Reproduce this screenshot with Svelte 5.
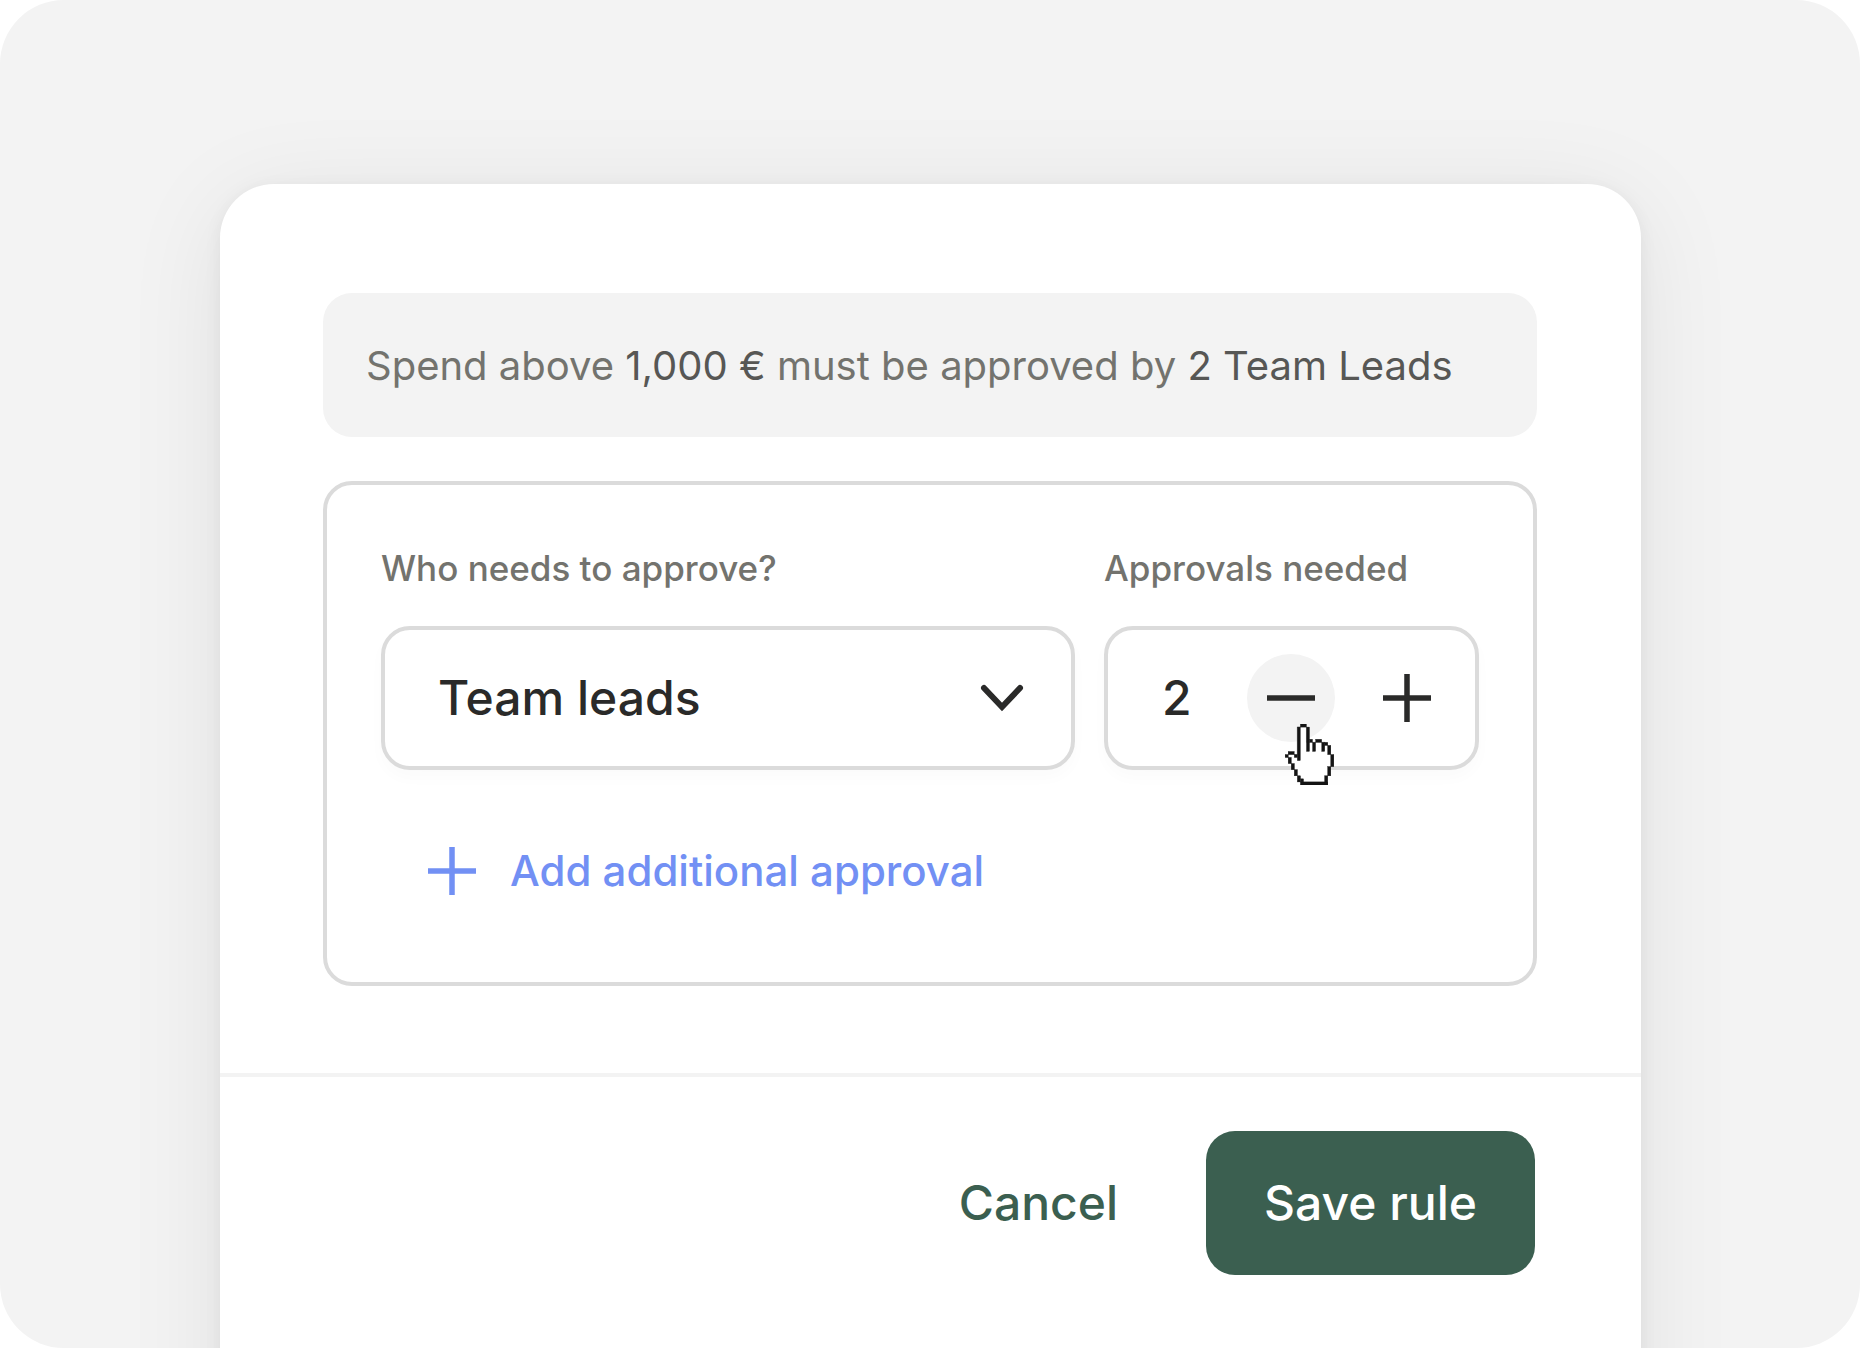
<script>
	let role = $state('Team leads');
	let approvals = $state(2);

	const roles = ['Team leads', 'Admins', 'Finance'];

	// Outline of the pointing hand on a 16x20 grid, as [x, y, width, height].
	const hand = [
		[5, 0, 2, 1],
		[4, 1, 1, 11],
		[7, 1, 1, 8],
		[8, 5, 1, 1],
		[9, 6, 1, 3],
		[10, 5, 2, 1],
		[12, 6, 1, 3],
		[13, 6, 1, 1],
		[14, 7, 1, 3],
		[15, 10, 1, 4],
		[14, 14, 1, 3],
		[13, 17, 1, 3],
		[5, 19, 9, 1],
		[5, 18, 1, 1],
		[4, 17, 1, 2],
		[3, 15, 1, 2],
		[2, 13, 1, 2],
		[1, 11, 1, 2],
		[0, 10, 1, 1],
		[1, 9, 2, 1],
		[3, 10, 1, 1]
	];
</script>

<main class="stage">
	<form class="card" onsubmit={(e) => e.preventDefault()}>
		<div class="body">
			<p class="summary">
				Spend above <strong>1,000 €</strong> must be approved by <strong>{approvals} Team Leads</strong>
			</p>

			<section class="rule">
				<div class="fields">
					<div class="field">
						<label for="role">Who needs to approve?</label>
						<div class="control">
							<select id="role" bind:value={role}>
								{#each roles as r (r)}
									<option>{r}</option>
								{/each}
							</select>
							<svg class="chevron" viewBox="0 0 44 28" aria-hidden="true">
								<path d="M4 4 22 23 40 4" />
							</svg>
						</div>
					</div>

					<div class="field">
						<label for="approvals">Approvals needed</label>
						<div class="control stepper">
							<input id="approvals" type="text" inputmode="numeric" bind:value={approvals} />
							<button
								type="button"
								class="step active"
								aria-label="Fewer approvals"
								onclick={() => (approvals = Math.max(1, +approvals - 1))}
							>
								<svg class="icon" viewBox="0 0 48 48" aria-hidden="true"><path d="M0 24h48" /></svg>
								<svg class="hand" viewBox="0 0 16 20" aria-hidden="true">
									<path class="fill" d="M5 1h2v5h6v1h1v3h1v4h-1v3h-1v2H6v-1H5v-1H4v-2H3v-2H2v-2H1v-1h3V1z" />
									{#each hand as [x, y, width, height]}
										<rect {x} {y} {width} {height} />
									{/each}
								</svg>
							</button>
							<button
								type="button"
								class="step"
								aria-label="More approvals"
								onclick={() => (approvals = +approvals + 1)}
							>
								<svg class="icon" viewBox="0 0 48 48" aria-hidden="true"><path d="M0 24h48M24 0v48" /></svg>
							</button>
						</div>
					</div>
				</div>

				<button type="button" class="add">
					<svg class="icon" viewBox="0 0 48 48" aria-hidden="true"><path d="M0 24h48M24 0v48" /></svg>
					Add additional approval
				</button>
			</section>
		</div>

		<footer class="actions">
			<button type="button" class="cancel">Cancel</button>
			<button type="submit" class="save">Save rule</button>
		</footer>
	</form>
</main>

<style>
	:global(body) {
		background: #fff;
	}
	.stage {
		box-sizing: border-box;
		display: flex;
		min-height: 100vh;
		padding: 184px 219px 0 220px;
		border-radius: 64px;
		overflow: hidden;
		background: #f3f3f3;
		font-family: Inter, 'Liberation Sans', sans-serif;
		font-weight: 500;
	}
	/* The card runs on past the bottom edge, so its shadow doesn't fade there. */
	.card {
		flex: 1;
		min-width: 0;
		margin-bottom: -120px;
		border-radius: 54px 54px 0 0;
		background: #fff;
		box-shadow:
			0 16px 100px rgba(0, 0, 0, 0.08),
			0 4px 18px rgba(0, 0, 0, 0.06);
	}
	.body {
		padding: 109px 104px 87px 103px;
	}
	.summary {
		margin: 0 0 44px;
		padding: 49px 43px 47px;
		border-radius: 29px;
		background: #f3f3f3;
		color: #73736e;
		font-size: 40px;
		font-weight: 400;
		line-height: 48px;
	}
	.summary strong {
		color: #575755;
		font-weight: 400;
	}
	.rule {
		padding: 59px 54px 75px;
		border: 4px solid #dbdbdb;
		border-radius: 29px;
	}
	.fields {
		display: grid;
		grid-template-columns: 694fr 375fr;
		gap: 29px;
	}
	.field {
		display: flex;
		flex-direction: column;
		gap: 34px;
		min-width: 0;
	}
	label {
		color: #73736e;
		font-size: 35px;
		line-height: 48px;
		white-space: nowrap;
	}
	.control {
		position: relative;
		box-sizing: border-box;
		display: flex;
		align-items: center;
		height: 144px;
		border: 4px solid #dbdbdb;
		border-radius: 29px;
		box-shadow: 0 8px 16px rgba(0, 0, 0, 0.02);
	}
	select,
	input,
	button {
		margin: 0;
		padding: 0;
		border: 0;
		background: none;
		color: #2a2a29;
		font: inherit;
	}
	select,
	input {
		font-size: 48px;
		line-height: 60px;
	}
	button {
		cursor: pointer;
	}
	select {
		flex: 1;
		align-self: stretch;
		padding: 0 100px 0 53px;
		border-radius: 25px;
		appearance: none;
	}
	.chevron {
		position: absolute;
		right: 47px;
		width: 44px;
		height: 28px;
		fill: none;
		stroke: #2a2a29;
		stroke-width: 6;
		stroke-linecap: round;
		stroke-linejoin: miter;
		pointer-events: none;
	}
	.stepper {
		padding: 0 24px 0 54px;
	}
	input {
		flex: 1;
		width: 0;
		min-width: 0;
	}
	.step {
		position: relative;
		display: grid;
		place-items: center;
		width: 88px;
		height: 88px;
		border-radius: 50%;
	}
	.step + .step {
		margin-left: 28px;
	}
	.step.active {
		background: #f3f3f3;
	}
	.icon {
		display: block;
		width: 48px;
		height: 48px;
		fill: none;
		stroke: currentColor;
		stroke-width: 5.5;
	}
	.hand {
		position: absolute;
		top: 70px;
		left: 38px;
		width: 49px;
		height: 61px;
		fill: #141414;
		stroke: #141414;
		stroke-width: 0.1;
	}
	.hand .fill {
		fill: #fff;
	}
	.add {
		display: flex;
		align-items: center;
		gap: 34px;
		margin-top: 65px;
		padding: 6px 47px;
		color: #7290f4;
		font-size: 42px;
		line-height: 60px;
	}
	.actions {
		display: flex;
		justify-content: flex-end;
		gap: 30px;
		padding: 54px 106px 70px;
		border-top: 4px solid #f3f3f3;
	}
	.actions button {
		padding: 42px 58px;
		border-radius: 29px;
		font-size: 48px;
		line-height: 60px;
	}
	.actions .cancel {
		color: #3b5f50;
	}
	.actions .save {
		background: #3b5f50;
		color: #fff;
	}
</style>
